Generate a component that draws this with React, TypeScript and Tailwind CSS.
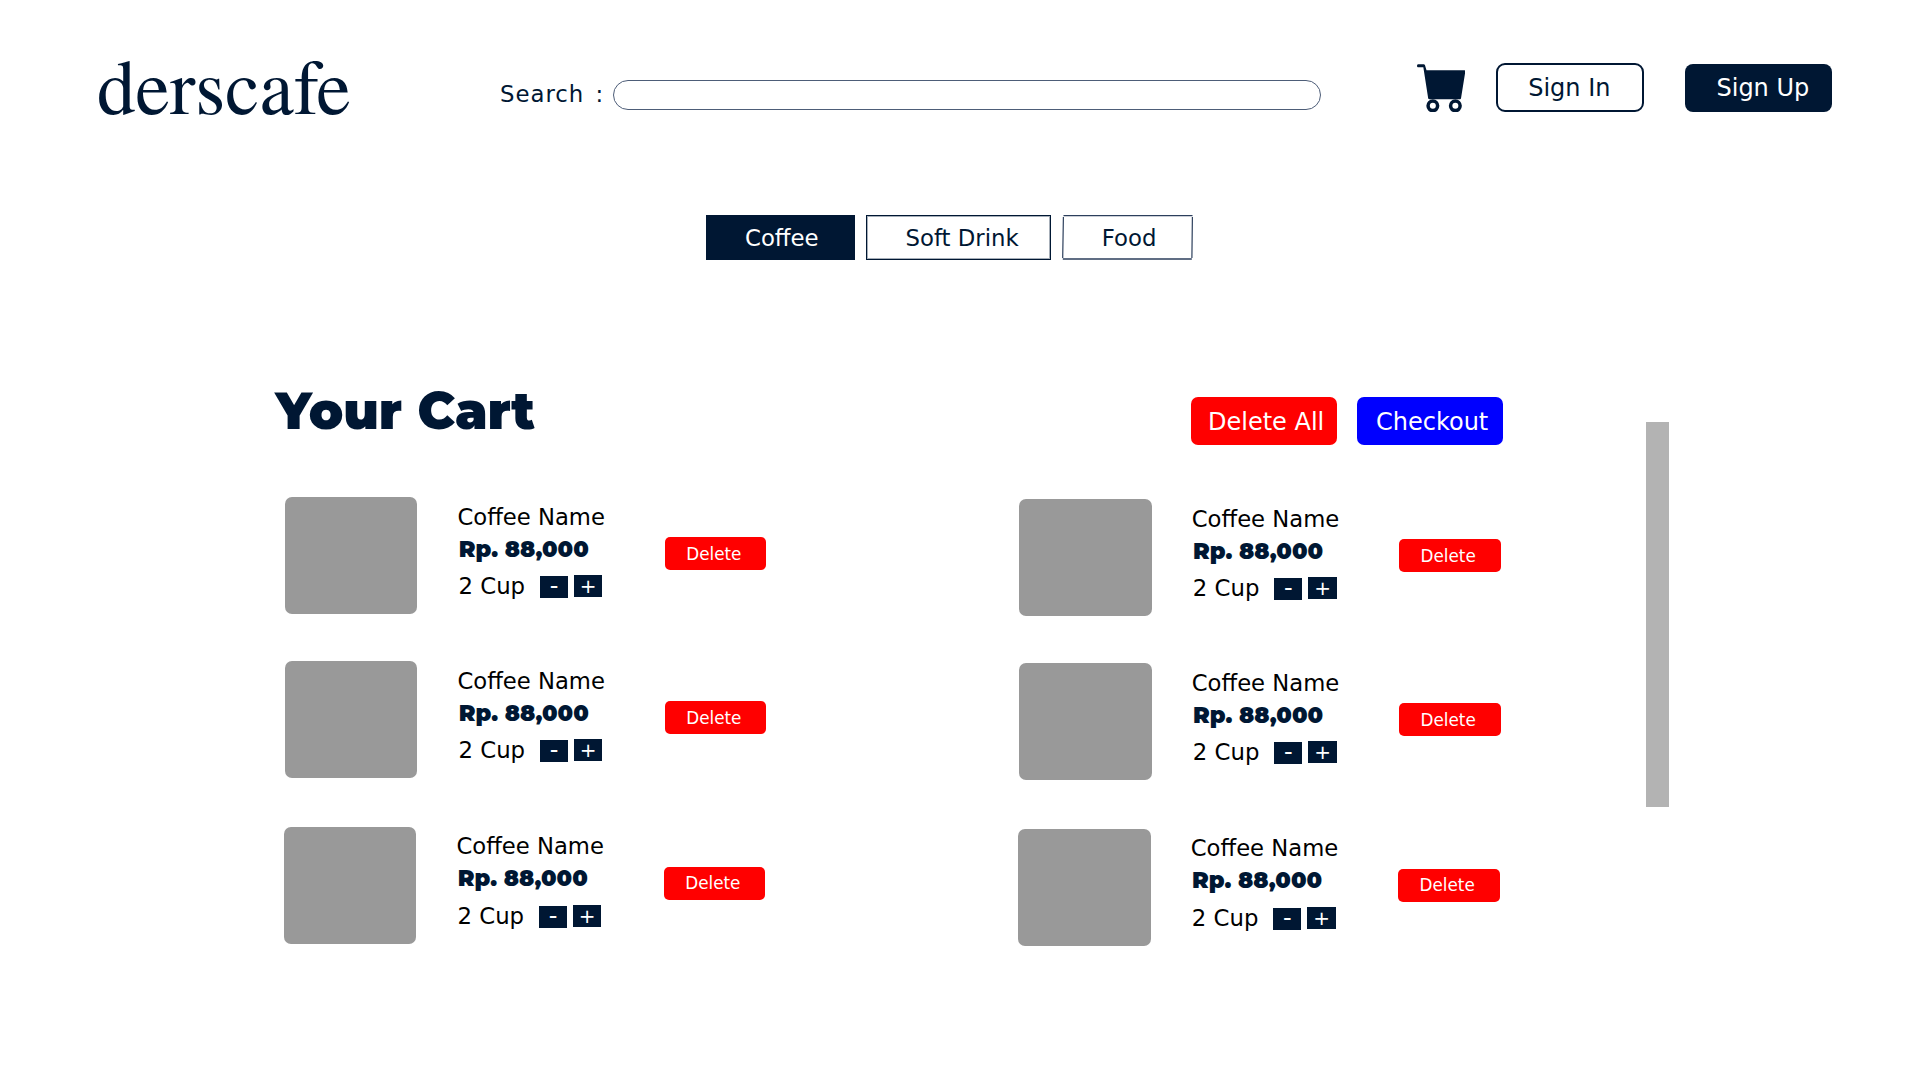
import React from "react";

const SANS = "font-['DejaVu_Sans',Verdana,sans-serif]";
const HEAVY = "font-['Montserrat',Inter,sans-serif] font-black";

function CartIcon() {
  return (
    <svg viewBox="50 26 146 146" className="h-[48.7px] w-[48.7px]" fill="#001733">
      <path d="M53 27H70Q73 27 74 30L78.5 45H193Q195.500 45 195 48L182 129Q181.500 132 179 132H87Q84 132 83.500 129L69 36H53Q50 36 50 31.500T53 27Z" />
      <ellipse cx="97.500" cy="151.500" rx="14.300" ry="14.300" fill="none" stroke="#001733" strokeWidth="10.500" />
      <ellipse cx="165" cy="151.500" rx="14.300" ry="14.300" fill="none" stroke="#001733" strokeWidth="10.500" />
    </svg>
  );
}

function Header() {
  return (
    <header className="flex h-[150px] items-start">
      <div className="ml-[97px] mt-[43px] w-[403px] shrink-0 font-['TeX_Gyre_Termes','Liberation_Serif','Times_New_Roman',serif] text-[77px] leading-[84px]">
        derscafe
      </div>
      <label className="mt-[81px] w-[113px] shrink-0 whitespace-nowrap text-[22.8px] leading-[26px] tracking-[1px] [word-spacing:3px]">
        Search :
      </label>
      <input className="mt-20 h-[30px] w-[708px] shrink-0 rounded-full border border-[#4d5d78] bg-white px-4 text-lg outline-none" />
      <button className="ml-[95.500px] mt-[63.500px] shrink-0" aria-label="Cart">
        <CartIcon />
      </button>
      <button className="ml-[31px] mt-[63px] h-[49px] w-[148px] shrink-0 rounded-[9px] border-2 border-[#001733] pl-[30px] text-left text-2xl leading-[28px]">
        Sign In
      </button>
      <button className="ml-[41.300px] mt-16 h-[47.500px] w-[146.300px] shrink-0 rounded-lg bg-[#001733] pl-[31px] text-left text-2xl leading-[28px] text-white">
        Sign Up
      </button>
    </header>
  );
}

function Categories() {
  return (
    <nav className="ml-[705.500px] mt-[65px] flex h-[44.500px] text-[22.8px] leading-[26px]">
      <button className="w-[149px] bg-[#001733] pl-[39.500px] pt-px text-left text-white">Coffee</button>
      <button className="ml-[11.500px] w-[185px] border border-[#001733] pl-[38.500px] pt-px text-left shadow-[inset_0_0_0_1px_rgba(0,23,51,0.35)]">
        Soft Drink
      </button>
      <button className="relative ml-[11px] w-[131px] pl-[39.800px] pt-px text-left">
        <svg viewBox="0 0 131 45" className="absolute inset-0 h-[45px] w-[131px]">
          <path
            d="M1.500 0.700H130.500M0.800 44H129.800"
            fill="none"
            stroke="#2c3f5c"
            strokeWidth="1.300"
          />
          <path d="M1.400 2L0.700 43M130.400 2L129.900 43" fill="none" stroke="#2c3f5c" strokeWidth="1.200" />
        </svg>
        Food
      </button>
    </nav>
  );
}

type Row = { item: string; name: string; cup: string; remove: string };

const rows: Row[] = [
  { item: "", name: "pt-[7px]", cup: "mt-2.5", remove: "" },
  { item: "mt-[47px]", name: "pt-[7px]", cup: "mt-2.5", remove: "" },
  { item: "-ml-px mt-[49px]", name: "pt-[6px]", cup: "mt-[11px]", remove: "pb-0.5" },
];

function CartItem({ row }: { row: Row }) {
  return (
    <article className={`flex h-[117px] items-start ${row.item}`}>
      <div className="h-[117px] w-[132.700px] shrink-0 rounded-[7px] bg-[#999999]" />
      <div className={`ml-[40.500px] w-[206.800px] shrink-0 ${row.name}`}>
        <div className="-ml-[0.5px] whitespace-nowrap text-[22.7px] leading-[26px] text-black">Coffee Name</div>
        <div className={`ml-[0.7px] mt-[5px] text-[22.5px] leading-[28px] ${HEAVY}`}>Rp. 88,000</div>
        <div className={`flex items-start ${row.cup}`}>
          <span className="w-[82px] pl-[0.5px] text-[22.8px] leading-[26px] text-black">2 Cup</span>
          <button className="mt-[3px] flex h-[22px] w-7 justify-center bg-[#001733] text-2xl leading-[20px] text-white">
            -
          </button>
          <button className="ml-1.5 mt-[2px] flex h-[22px] w-[28.500px] justify-center bg-[#001733] text-[20px] leading-[22px] text-white">
            +
          </button>
        </div>
      </div>
      <button
        className={`mt-10 h-[33px] w-[101.500px] shrink-0 rounded-[5px] bg-[#ff0000] pl-[21.500px] text-left text-[16.8px] leading-[20px] text-white ${row.remove}`}
      >
        Delete
      </button>
    </article>
  );
}

function CartColumn({ className }: { className: string }) {
  return (
    <div className={`w-[734px] shrink-0 ${className}`}>
      {rows.map((row, i) => (
        <CartItem key={i} row={row} />
      ))}
    </div>
  );
}

export default function App() {
  return (
    <div className={`h-[1080px] w-[1920px] overflow-hidden bg-white text-[#001733] ${SANS}`}>
      <Header />
      <Categories />
      <main className="mt-[120.500px] flex items-start">
        <section className="w-[1646px] shrink-0">
          <div className="flex h-[117px] items-start">
            <h1 className={`ml-[275.500px] w-[915.500px] shrink-0 text-[51px] leading-[62px] ${HEAVY}`}>Your Cart</h1>
            <button className="mt-[17.400px] h-12 w-[146px] shrink-0 rounded-[7px] bg-[#ff0000] pl-[17px] pt-px text-left text-2xl leading-[28px] whitespace-nowrap text-white">
              Delete All
            </button>
            <button className="ml-5 mt-[17.400px] h-12 w-[146px] shrink-0 rounded-[7px] bg-[#0000ff] pl-[19px] pt-px text-left text-2xl leading-[28px] text-white">
              Checkout
            </button>
          </div>
          <div className="ml-[284.800px] flex items-start">
            <CartColumn className="" />
            <CartColumn className="ml-[0.3px] mt-0.5" />
          </div>
        </section>
        <div className="mt-[42px] h-[385px] w-[23px] shrink-0 bg-[#b3b3b3]" />
      </main>
    </div>
  );
}
